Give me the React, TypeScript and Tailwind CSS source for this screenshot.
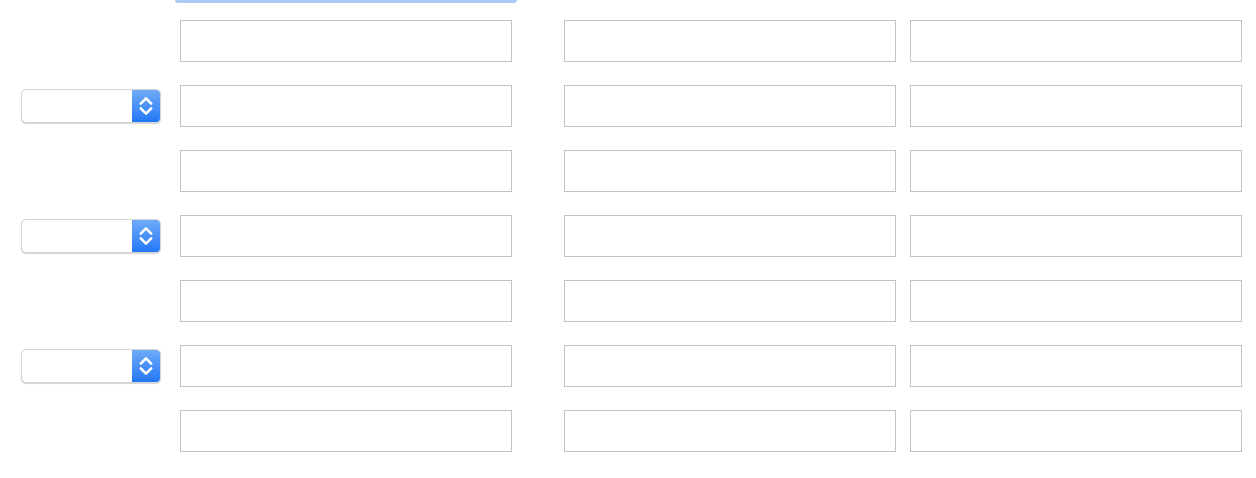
import React from "react";

const rows = [0, 1, 2, 3, 4, 5, 6];
const selectRows = [1, 3, 5];

function Field() {
  return <div className="h-[42px] w-[332px] border border-[#c2c2c2] bg-white" />;
}

function Stepper() {
  return (
    <div className="flex h-[34px] w-[140px] overflow-hidden rounded-[5px] border border-[#d4d4d4] bg-white shadow-[0_1px_1px_rgba(0,0,0,0.18)]">
      <div className="flex-1" />
      <div className="flex w-[28px] items-center justify-center bg-gradient-to-b from-[#6eaaf8] to-[#2177f6]">
        <svg width="16" height="22" viewBox="0 0 16 22" fill="none">
          <path d="M2.8 8.6 L8 3.4 L13.2 8.6" stroke="white" strokeWidth="2.6" strokeLinecap="round" strokeLinejoin="round" />
          <path d="M2.8 13.4 L8 18.6 L13.2 13.4" stroke="white" strokeWidth="2.6" strokeLinecap="round" strokeLinejoin="round" />
        </svg>
      </div>
    </div>
  );
}

export default function App() {
  return (
    <div className="h-[478px] w-[1256px] overflow-hidden bg-white">
      <div className="ml-[175px] h-[3px] w-[342px] rounded-b-[3px] bg-[#a9cbf6]" />
      <div className="mt-[17px] flex flex-col gap-[23px] pl-[21px]">
        {rows.map((r) => (
          <div key={r} className="flex items-center">
            <div className="mr-[19px] w-[140px]">{selectRows.includes(r) && <Stepper />}</div>
            <Field />
            <div className="w-[52px]" />
            <Field />
            <div className="w-[14px]" />
            <Field />
          </div>
        ))}
      </div>
    </div>
  );
}
